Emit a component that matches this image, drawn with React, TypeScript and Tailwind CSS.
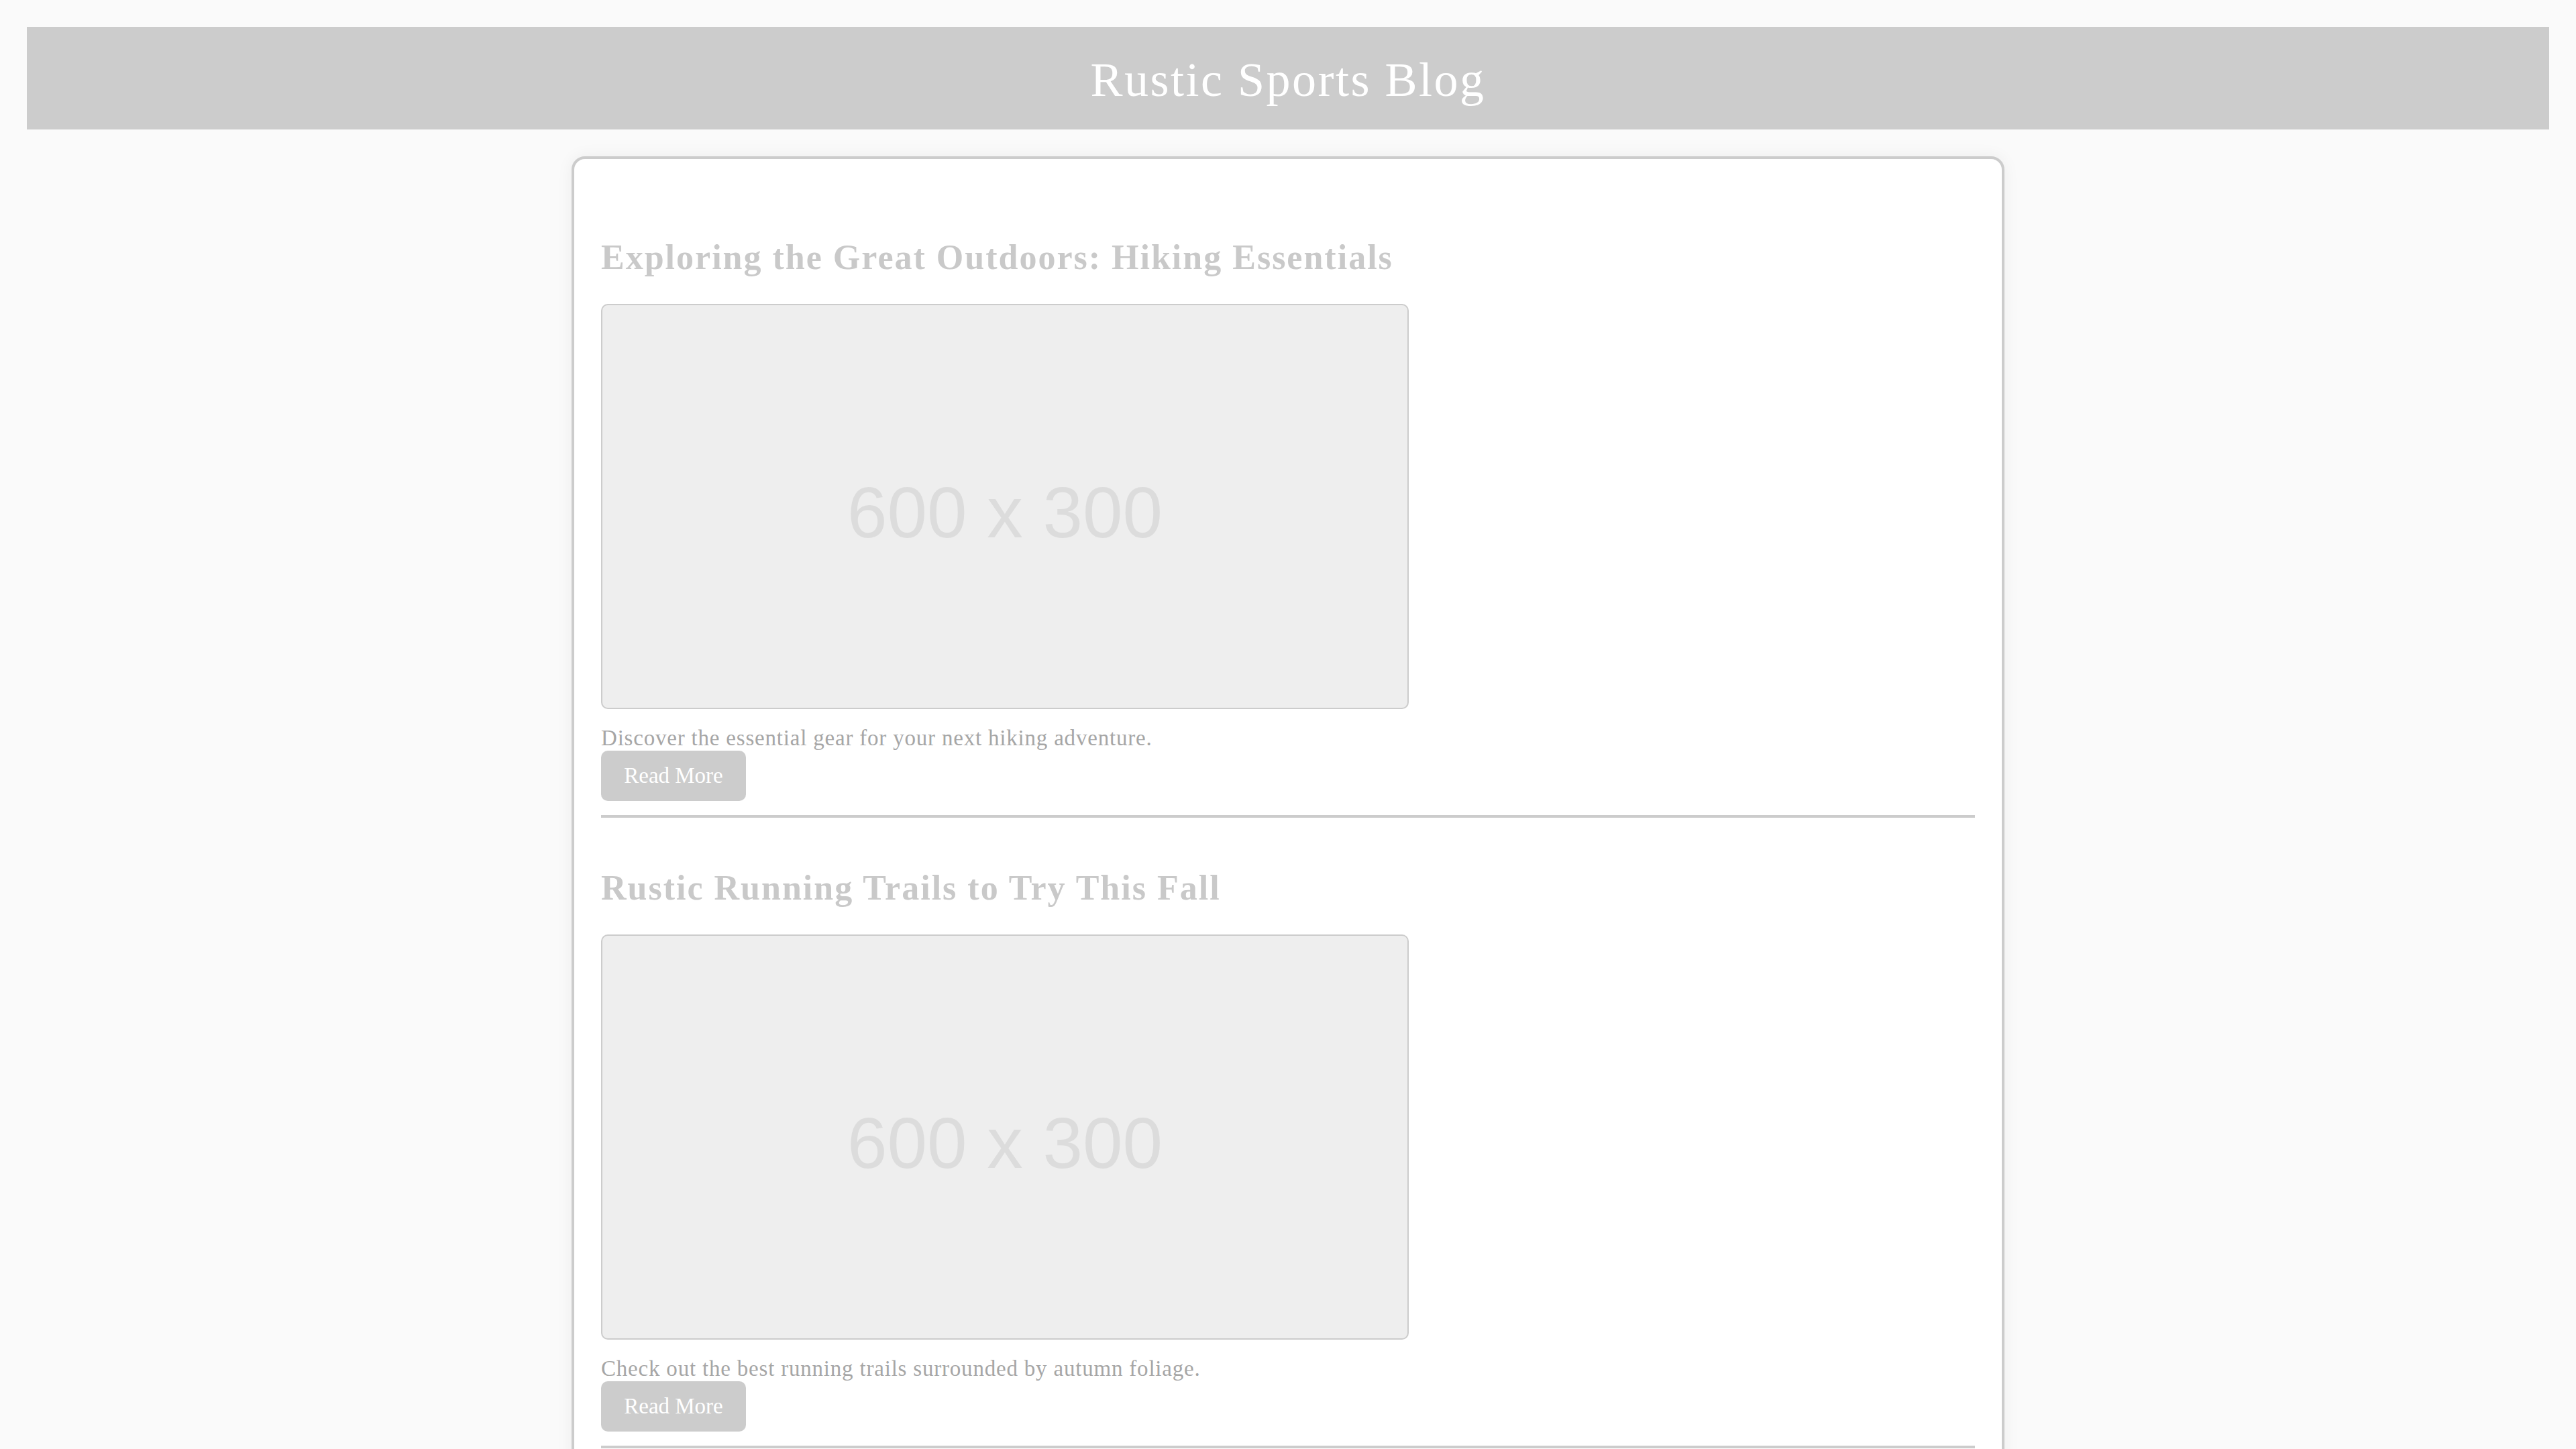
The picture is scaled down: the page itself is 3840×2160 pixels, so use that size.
import React from "react";

type Post = { title: string; desc: string };

const posts: Post[] = [
  { title: "Exploring the Great Outdoors: Hiking Essentials", desc: "Discover the essential gear for your next hiking adventure." },
  { title: "Rustic Running Trails to Try This Fall", desc: "Check out the best running trails surrounded by autumn foliage." },
];

const serif = { fontFamily: '"Liberation Serif", "DejaVu Serif", serif' };

function Article({ post }: { post: Post }) {
  return (
    <article className="flex flex-col items-start">
      <h2
        className="mt-[75px] text-[52px] font-bold leading-[60px] tracking-[2px] text-[#c9c9c9] whitespace-nowrap"
        style={serif}
      >
        {post.title}
      </h2>
      <div className="mt-[39px] flex h-[604px] w-[1204px] items-center justify-center rounded-[10px] border-2 border-[#cccccc] bg-[#eeeeee]">
        <span
          className="mt-[18px] text-[107px] leading-none text-[#dcdcdc]"
          style={{ fontFamily: '"Liberation Sans", Arial, sans-serif' }}
        >
          600 x 300
        </span>
      </div>
      <p
        className="mt-[25px] text-[33px] leading-[37px] tracking-[0.8px] text-[#a6a6a6]"
        style={serif}
      >
        {post.desc}
      </p>
      <button
        className="flex h-[75px] w-[216px] items-center justify-center rounded-[10px] bg-[#cccccc] text-[33px] text-white"
        style={serif}
      >
        Read More
      </button>
      <div className="mt-[21px] h-[4px] w-full bg-[#cccccc]" />
    </article>
  );
}

export default function App() {
  return (
    <div className="min-h-screen bg-[#fafafa] p-[40px]">
      <header className="flex h-[153px] justify-center bg-[#cccccc] pt-[39px]">
        <h1
          className="text-[72px] font-normal leading-[80px] tracking-[2.5px] text-white"
          style={serif}
        >
          Rustic Sports Blog
        </h1>
      </header>
      <main className="mt-[40px] flex justify-center">
        <div className="w-[2136px] rounded-[20px] border-4 border-[#cccccc] bg-white px-[40px] pb-[40px] pt-[42px] shadow-[0_0_24px_rgba(0,0,0,0.06)]">
          {posts.map((p) => (
            <Article key={p.title} post={p} />
          ))}
        </div>
      </main>
    </div>
  );
}
